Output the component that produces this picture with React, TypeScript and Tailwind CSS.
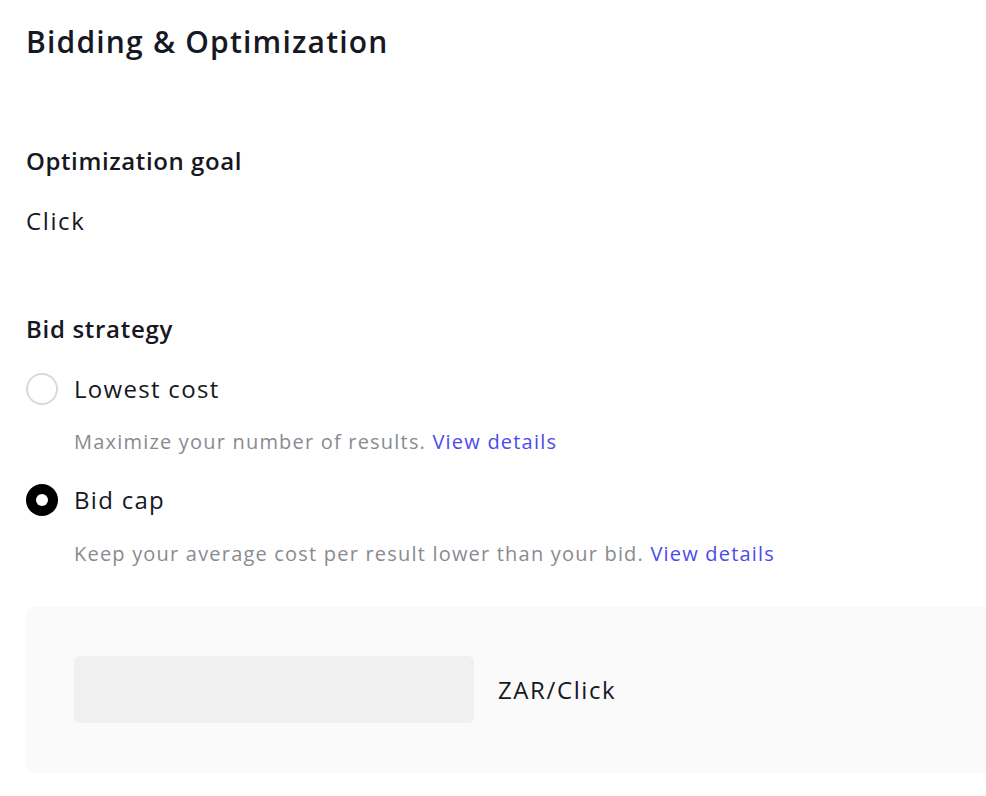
import React from "react";

const font = { fontFamily: '"Open Sans", "Lato", sans-serif' };

function Radio({ checked, label }: { checked?: boolean; label: string }) {
    return (
        <label className="flex items-center h-8 cursor-pointer">
            {checked ? (
                <span className="w-8 h-8 rounded-full bg-black flex items-center justify-center shrink-0">
                    <span className="w-3 h-3 rounded-full bg-white" />
                </span>
            ) : (
                <span className="w-8 h-8 rounded-full border-2 border-[#d9d9d9] bg-white shrink-0" />
            )}
            <span className="ml-4 text-[24px] leading-8 tracking-[1.3px] text-[#161823]">{label}</span>
        </label>
    );
}

export default function App() {
    return (
        <div className="bg-white min-h-[796px] overflow-hidden text-[#161823]" style={font}>
            <div className="pl-[26px] pt-[22px]">
                <h1 className="text-[30px] leading-10 font-semibold tracking-[1.2px]">Bidding &amp; Optimization</h1>

                {/* Optimization goal */}
                <div className="mt-[83px]">
                    <h2 className="text-[24px] leading-8 font-semibold tracking-[0.6px]">Optimization goal</h2>
                    <p className="mt-7 text-[24px] leading-8 tracking-[1.6px]">Click</p>
                </div>

                {/* Bid strategy */}
                <div className="mt-[76px]">
                    <h2 className="text-[24px] leading-8 font-semibold tracking-[0.7px]">Bid strategy</h2>

                    <div className="mt-7">
                        <Radio label="Lowest cost" />
                        <p className="mt-[23px] ml-12 text-[20px] leading-7 tracking-[1.2px] text-[#8a8a8f]">
                            Maximize your number of results.{" "}
                            <a className="text-[#4b4bea]">View details</a>
                        </p>
                    </div>

                    <div className="mt-7">
                        <Radio checked label="Bid cap" />
                        <p className="mt-6 ml-12 text-[20px] leading-7 tracking-[1.2px] text-[#8a8a8f]">
                            Keep your average cost per result lower than your bid.{" "}
                            <a className="text-[#4b4bea]">View details</a>
                        </p>
                    </div>

                    <div className="mt-[39px] w-[990px] rounded-lg bg-[#fafafa] pt-[49px] pb-[50px] pl-12 flex items-center">
                        <input
                            className="w-[400px] h-[67px] rounded-md bg-[#f0f0f0] outline-none px-4 text-[24px]"
                            style={font}
                        />
                        <span className="ml-6 text-[24px] leading-8 tracking-[1.6px]">ZAR/Click</span>
                    </div>
                </div>
            </div>
        </div>
    );
}
